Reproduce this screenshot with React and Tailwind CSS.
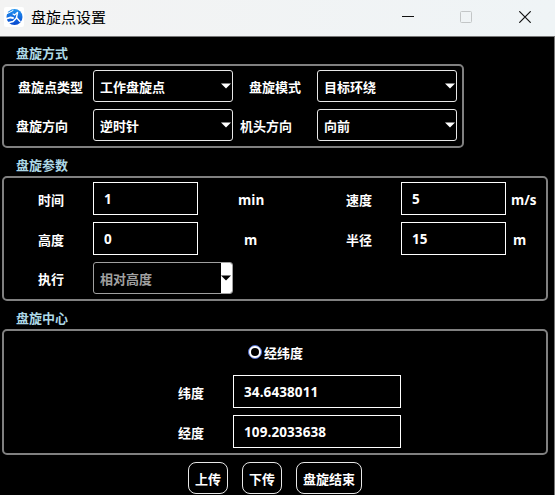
import React, { useState } from 'react';
import clsx from 'clsx';

export default function App() {
  const [center, setCenter] = useState('');

  return (
    <div className="w-[555px] h-[495px] overflow-hidden bg-black text-white flex flex-col font-['Open_Sans','Noto_Sans_CJK_SC',sans-serif]">
      <TitleBar title="盘旋点设置" />

      <main className="flex-1 min-h-0 pl-[2px] border-r border-[#777] text-[13px] leading-[18px] font-bold">
        <Group title="盘旋方式" titleClass="h-[27px] pt-[7px]" className="w-[462px] h-[84px] pt-[4px] gap-[7px]">
          <div className="flex items-center">
            <Label className="w-[75px] pl-[14px]">盘旋点类型</Label>
            <Select className="ml-[14px]" value="工作盘旋点" />
            <Label className="w-[68px] ml-[16px]">盘旋模式</Label>
            <Select value="目标环绕" />
          </div>
          <div className="flex items-center">
            <Label className="w-[78px] pl-[12px]">盘旋方向</Label>
            <Select className="ml-[11px]" value="逆时针" />
            <Label className="w-[77px] ml-[7px]">机头方向</Label>
            <Select value="向前" />
          </div>
        </Group>

        <Group title="盘旋参数" titleClass="h-[28px] pt-[8px]" className="w-[546px] h-[125px] pt-[4px] gap-[7px]">
          <div className="flex items-center">
            <Label className="w-[55px] ml-[34px]">时间</Label>
            <Input className="w-[105px]" value="1" />
            <Unit className="w-[108px] ml-[40px]">min</Unit>
            <Label className="w-[55px]">速度</Label>
            <Input className="w-[105px]" value="5" />
            <Unit className="ml-[5px]">m/s</Unit>
          </div>
          <div className="flex items-center">
            <Label className="w-[55px] ml-[34px]">高度</Label>
            <Input className="w-[105px]" value="0" />
            <Unit className="w-[102px] ml-[46px]">m</Unit>
            <Label className="w-[55px]">半径</Label>
            <Input className="w-[105px]" value="15" />
            <Unit className="ml-[7px]">m</Unit>
          </div>
          <div className="flex items-center">
            <Label className="w-[55px] ml-[34px]">执行</Label>
            <Select value="相对高度" disabled />
          </div>
        </Group>

        <Group title="盘旋中心" titleClass="h-[28px] pt-[8px]" className="w-[546px] h-[126px] pt-[13px]">
          <button
            onClick={() => setCenter('lnglat')}
            className="flex items-center gap-[2px] ml-[244px] h-[16px] mb-[15px]"
          >
            <span
              className={clsx(
                'w-[14px] h-[14px] rounded-full border border-[#4a68cc] p-px flex',
                center === 'lnglat' ? 'bg-[#4a68cc]' : 'bg-white'
              )}
            >
              <span className="m-px flex-1 rounded-full bg-black" />
            </span>
            <span className="pt-px">经纬度</span>
          </button>
          <div className="flex items-center">
            <Label className="w-[55px] ml-[174px]">纬度</Label>
            <Input className="w-[168px]" value="34.6438011" />
          </div>
          <div className="flex items-center mt-[7px]">
            <Label className="w-[55px] ml-[174px]">经度</Label>
            <Input className="w-[168px]" value="109.2033638" />
          </div>
        </Group>

        <div className="flex gap-[14px] mt-[7px] ml-[186px]">
          <ActionBtn className="w-[40px]">上传</ActionBtn>
          <ActionBtn className="w-[40px]">下传</ActionBtn>
          <ActionBtn className="w-[66px]">盘旋结束</ActionBtn>
        </div>
      </main>
    </div>
  );
}

const TitleBar = ({ title }) => (
  <header className="h-[37px] shrink-0 bg-linear-to-r from-[#f3f3f3] to-[#eff4f6] border-b border-[#777] flex items-center text-black">
    <Logo />
    <span className="ml-[7px] mt-[-3px] text-[15px] leading-[20px]">{title}</span>
    <div className="ml-auto mr-[24px] mt-[-3px] flex items-center gap-[47px]">
      <svg className="-mr-px" width="12" height="12" viewBox="0 0 12 12" fill="none" stroke="#111" shapeRendering="crispEdges">
        <path d="M0 5.500h12" />
      </svg>
      <svg width="12" height="12" viewBox="0 0 12 12" fill="none" stroke="#c3c6c7">
        <rect x=".5" y=".5" width="11" height="11" rx="1" />
      </svg>
      <svg width="12" height="12" viewBox="0 0 12 12" fill="none" stroke="#111" strokeWidth="1.2">
        <path d="M.3.3l11.4 11.4M11.7.3L.3 11.7" />
      </svg>
    </div>
  </header>
);

const Logo = () => (
  <svg className="ml-[4px] mt-[-2px]" width="20" height="20" viewBox="0 0 20 20">
    <defs>
      <linearGradient id="logo" x1="0" y1="0" x2="0" y2="1">
        <stop offset="0" stopColor="#2394f0" />
        <stop offset="1" stopColor="#0647d0" />
      </linearGradient>
    </defs>
    <rect width="20" height="20" rx="2" fill="#fff" />
    <circle cx="10.500" cy="10" r="8" fill="url(#logo)" />
    <g fill="none" stroke="#fff" strokeLinecap="round">
      <path d="M2.500 7L9 3.500" strokeWidth="1" />
      <path d="M1.500 12l5-1.500 2.500.5" strokeWidth="1.800" />
      <path d="M9 7l1.500 1 3-2.500" strokeWidth="1.100" />
      <path d="M13.500 5.500l-1 5 3.500 4" strokeWidth="1.400" />
      <path d="M12.500 11L9 14.500l-6 1.500" strokeWidth="1.500" />
    </g>
  </svg>
);

const Group = ({ title, titleClass, className, children }) => (
  <section>
    <h2 className={clsx('pl-[14px] text-[#add8e6]', titleClass)}>{title}</h2>
    <div className={clsx('flex flex-col border-2 border-[#808080] rounded-[5px]', className)}>{children}</div>
  </section>
);

const Label = ({ className, children }) => (
  <span className={clsx('shrink-0 whitespace-nowrap pt-[2px]', className)}>{children}</span>
);

const Unit = ({ className, children }) => (
  <span className={clsx('shrink-0 whitespace-nowrap pt-[2px] text-[13.5px]', className)}>{children}</span>
);

const Input = ({ className, value }) => (
  <input
    defaultValue={value}
    className={clsx('h-[33px] border border-white bg-black pl-[10px] text-[13.5px] tracking-[0.1px] outline-none', className)}
  />
);

const Select = ({ className, value, disabled }) => (
  <button
    disabled={disabled}
    className={clsx(
      'w-[140px] h-[32px] shrink-0 flex items-center justify-between border rounded-[3px] pl-[6px] overflow-hidden text-left',
      disabled ? 'border-[#a0a0a0] text-[#a0a0a0]' : 'border-[#e8e8e8]',
      className
    )}
  >
    <span className="pt-[2px]">{value}</span>
    <span className={clsx('w-[11px] h-[32px] flex items-center', disabled && 'bg-white text-black')}>
      <svg className="shrink-0" width="10" height="6" viewBox="0 0 10 6" fill="currentColor">
        <path d="M0 .5h10L5 5.500z" />
      </svg>
    </span>
  </button>
);

const ActionBtn = ({ className, children }) => (
  <button className={clsx('h-[32px] border border-[#e8e8e8] rounded-[8px] pt-[2px] whitespace-nowrap', className)}>
    {children}
  </button>
);
